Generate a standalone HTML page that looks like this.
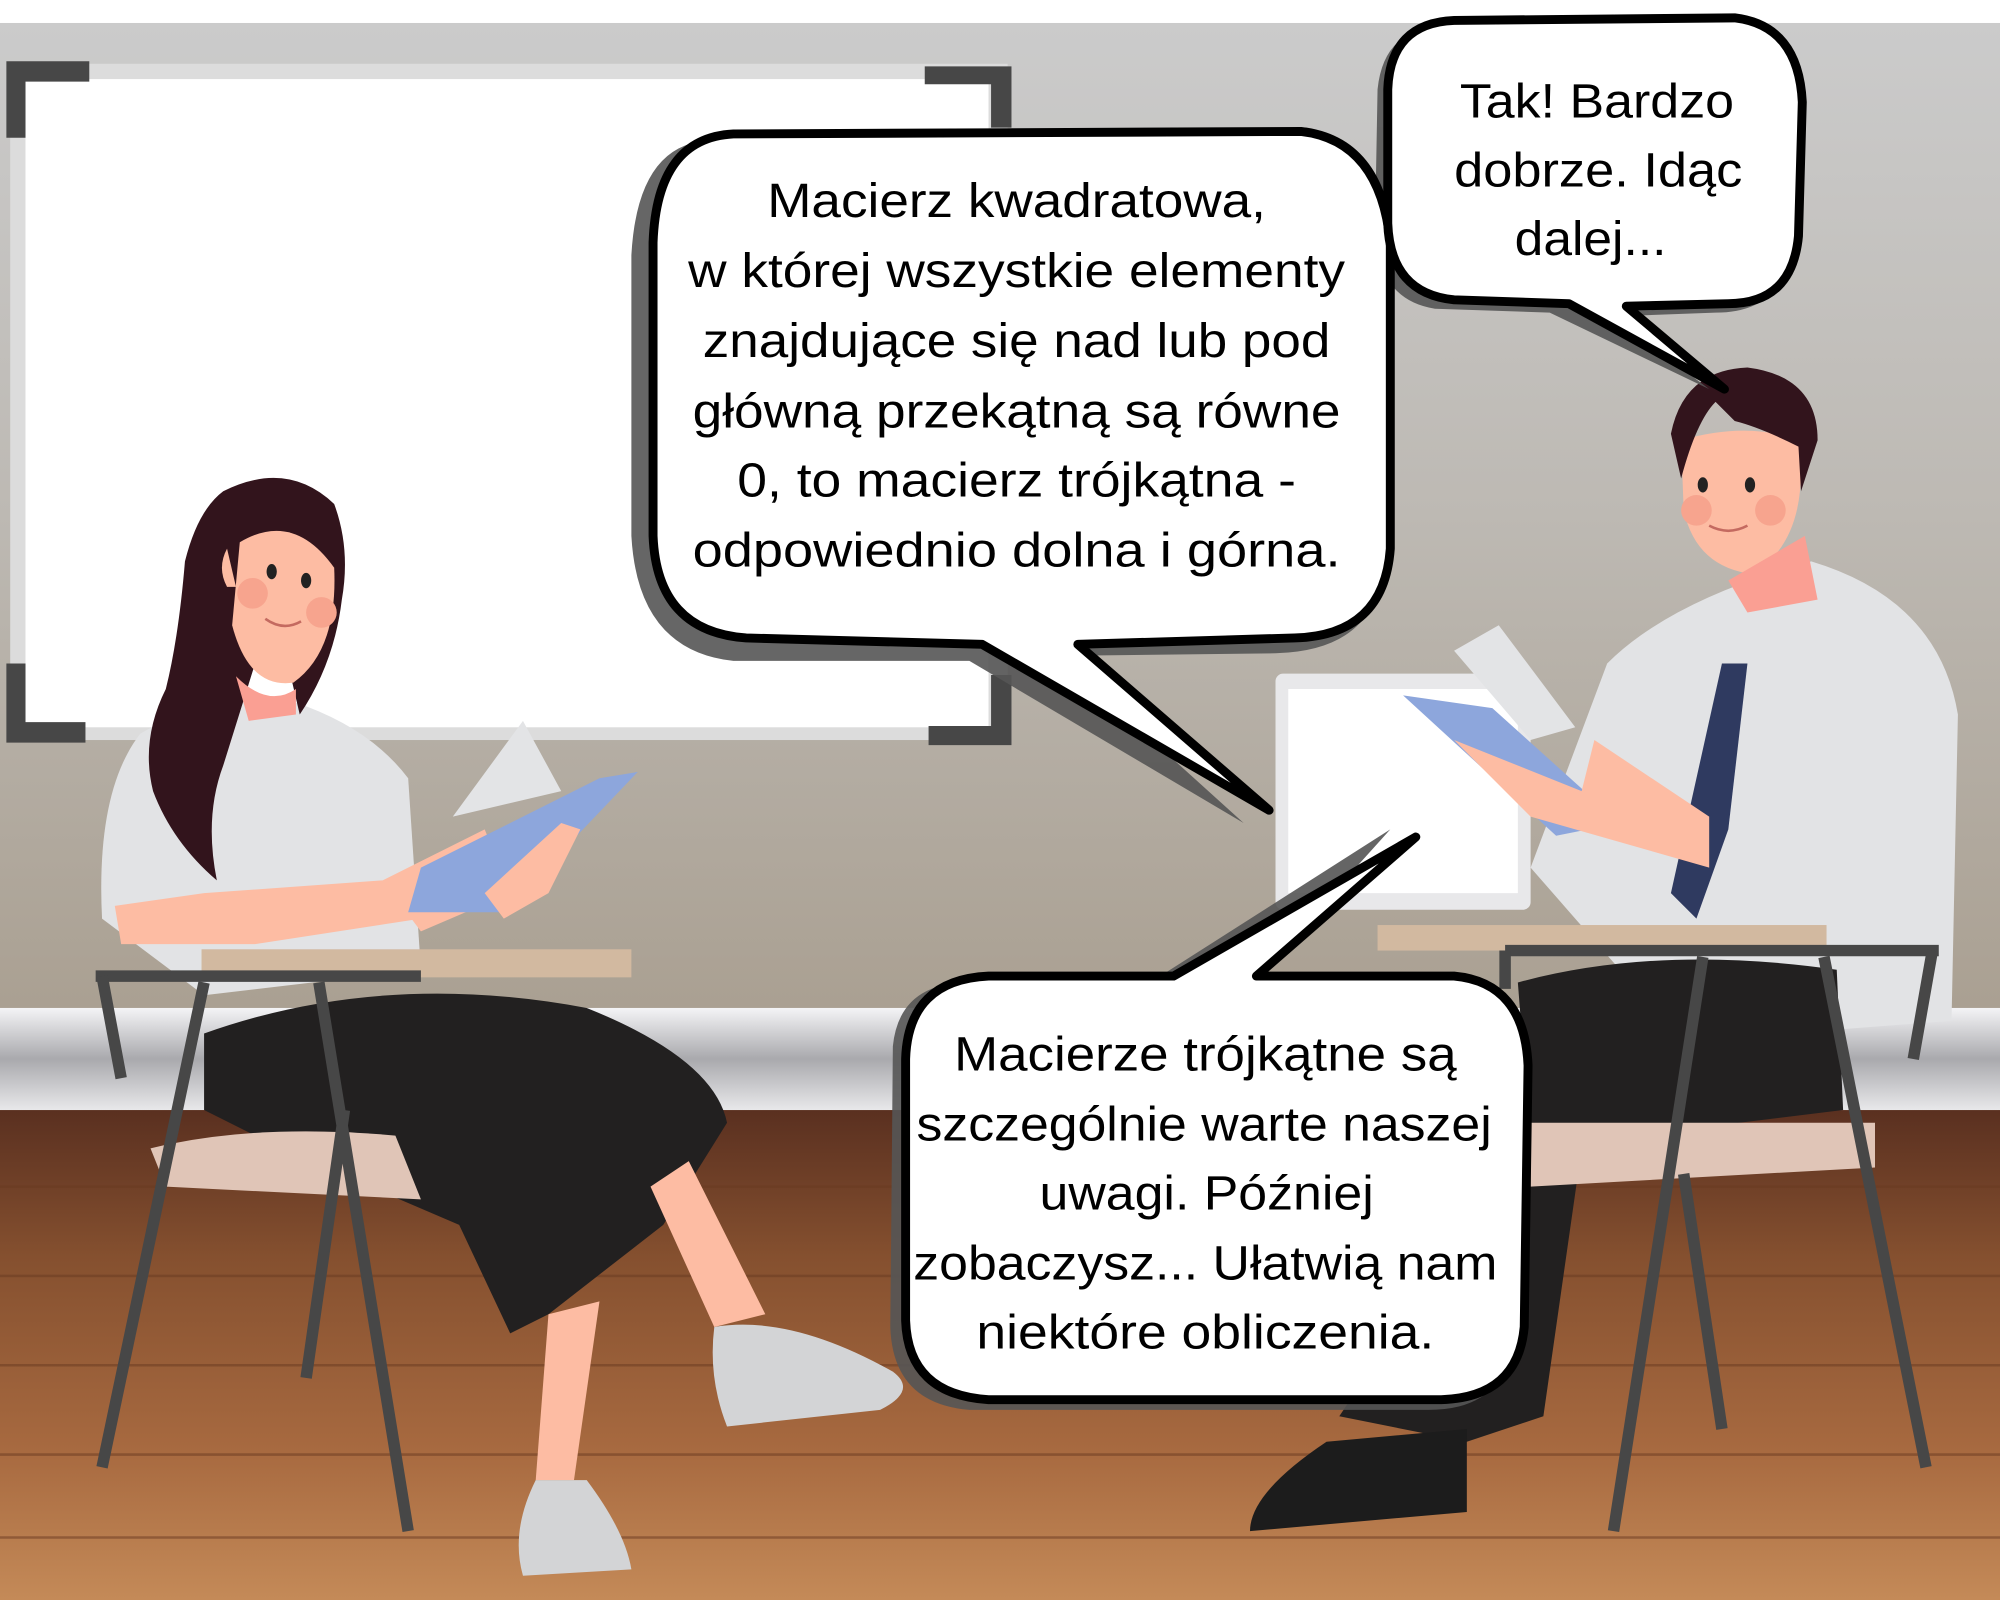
<!DOCTYPE html>
<html><head><meta charset="utf-8"><style>html,body{margin:0;padding:0;width:2000px;height:1600px;overflow:hidden;background:#fff}svg{display:block}
text{font-family:"Liberation Sans",sans-serif;font-size:38px;fill:#000;text-anchor:middle}</style></head><body>
<svg width="2000" height="1600" viewBox="0 0 1568 1254" preserveAspectRatio="none" xmlns="http://www.w3.org/2000/svg">
<defs>
<linearGradient id="wall" x1="0" y1="0" x2="0" y2="1"><stop offset="0" stop-color="#cbcbcb"/><stop offset="0.5" stop-color="#bdb9b3"/><stop offset="1" stop-color="#aaa092"/></linearGradient>
<linearGradient id="base" x1="0" y1="0" x2="0" y2="1"><stop offset="0" stop-color="#f4f4f6"/><stop offset="0.5" stop-color="#a9a9ad"/><stop offset="1" stop-color="#e8e8ea"/></linearGradient>
<linearGradient id="floor" x1="0" y1="0" x2="0" y2="1"><stop offset="0" stop-color="#5a3020"/><stop offset="0.3" stop-color="#85502f"/><stop offset="0.7" stop-color="#a86a40"/><stop offset="1" stop-color="#c48a58"/></linearGradient>
</defs>
<rect width="1568" height="1254" fill="#fff"/>
<rect y="18" width="1568" height="772" fill="url(#wall)"/>
<rect y="790" width="1568" height="80" fill="url(#base)"/>
<rect y="870" width="1568" height="384" fill="url(#floor)"/>
<g stroke="#6a3a22" stroke-width="2" opacity="0.5">
<line x1="0" y1="930" x2="1568" y2="930"/><line x1="0" y1="1000" x2="1568" y2="1000"/><line x1="0" y1="1070" x2="1568" y2="1070"/><line x1="0" y1="1140" x2="1568" y2="1140"/><line x1="0" y1="1205" x2="1568" y2="1205"/></g>
<!-- whiteboard -->
<rect x="8" y="50" width="782" height="530" fill="#dcdcdc"/>
<rect x="20" y="62" width="755" height="508" fill="#fff"/>
<path d="M5 108V48h65v16H20v44z M725 52h68v48h-16V66h-52z M5 520v62h62v-16H20v-46z M728 584h65v-55h-16v40h-49z" fill="#474747"/>
<!-- monitor -->
<rect x="1000" y="528" width="200" height="185" rx="6" fill="#e8e8ea"/>
<rect x="1010" y="540" width="180" height="160" fill="#fff"/>
<!-- woman -->
<path d="M110 575 Q170 540 230 550 Q290 570 320 610 L330 760 L160 780 L80 720 Q75 620 110 575Z" fill="#e2e3e5"/>
<path d="M175 385 Q225 360 262 395 Q275 430 268 470 Q262 520 235 560 L228 530 L200 520 L175 600 Q160 640 170 690 Q135 660 120 620 Q110 580 130 540 Q140 500 145 440 Q155 400 175 385Z" fill="#32141c"/>
<path d="M188 425 Q230 400 262 445 Q265 510 230 535 Q195 540 182 490Z" fill="#fdbca3"/>
<path d="M178 430 Q170 445 178 460 L185 460Z" fill="#fdbca3"/>
<circle cx="198" cy="465" r="12" fill="#f7a48e"/><circle cx="252" cy="480" r="12" fill="#f7a48e"/>
<ellipse cx="213" cy="448" rx="4" ry="6" fill="#222"/><ellipse cx="240" cy="455" rx="4" ry="6" fill="#222"/>
<path d="M208 485 Q222 495 236 487" stroke="#c46a60" stroke-width="2" fill="none"/>
<path d="M185 530 Q210 555 232 540 L232 560 L195 565Z" fill="#fa9f93"/>
<path d="M90 710 L160 700 L300 690 L330 720 L200 740 L95 740Z" fill="#fdbca3"/>
<path d="M300 690 L380 650 L400 700 L330 730Z" fill="#fdbca3"/>
<path d="M355 640 L410 565 L440 620Z" fill="#e3e4e6"/>
<path d="M330 680 L470 610 L500 605 L395 715 L320 715Z" fill="#8da6dc"/>
<path d="M380 700 L440 645 L455 650 L430 700 L395 720Z" fill="#fdbca3"/>
<path d="M160 810 Q300 760 460 790 Q560 830 570 880 L520 960 L430 1030 L400 1045 L360 960 L220 900 L160 870Z" fill="#222020"/>
<path d="M430 1030 L420 1160 L450 1160 L470 1020Z" fill="#fdbca3"/>
<path d="M510 930 L560 1040 L600 1030 L540 910Z" fill="#fdbca3"/>
<path d="M560 1040 Q620 1030 700 1075 Q720 1090 690 1105 L570 1118 Q555 1080 560 1040Z" fill="#d3d4d6"/>
<path d="M420 1160 L460 1160 Q490 1200 495 1230 L410 1235 Q400 1200 420 1160Z" fill="#d3d4d6"/>
<path d="M118 900 Q200 880 310 890 L330 940 L130 930Z" fill="#e0c5b7"/>
<rect x="158" y="744" width="337" height="22" fill="#d2b9a0"/>
<g stroke="#474747" stroke-width="9" fill="none"><path d="M75 765h255"/><path d="M80 765l15 80M160 770l-80 380M250 770l70 430M270 870l-30 210"/></g>
<!-- man -->
<path d="M1260 520 Q1310 470 1420 440 Q1520 470 1535 560 L1530 800 L1400 810 L1270 760 L1200 680Z" fill="#e2e3e5"/>
<path d="M1318 345 Q1370 330 1410 345 Q1420 420 1375 450 Q1330 445 1320 400Z" fill="#fdbca3"/>
<path d="M1355 455 L1415 420 L1425 470 L1370 480Z" fill="#fa9f93"/>
<path d="M1310 340 Q1320 290 1370 288 Q1425 295 1425 345 L1412 385 L1410 350 Q1380 335 1360 330 L1345 315 Q1330 330 1318 375Z" fill="#32141c"/>
<circle cx="1330" cy="400" r="12" fill="#f7a48e"/><circle cx="1388" cy="400" r="12" fill="#f7a48e"/>
<ellipse cx="1335" cy="380" rx="4" ry="6" fill="#222"/><ellipse cx="1372" cy="380" rx="4" ry="6" fill="#222"/>
<path d="M1340 412 Q1355 420 1370 412" stroke="#c46a60" stroke-width="2" fill="none"/>
<path d="M1350 520 L1370 520 L1355 650 L1330 720 L1310 700Z" fill="#2f3a60"/>
<path d="M1140 510 L1175 490 L1235 570 L1200 580Z" fill="#e3e4e6"/>
<path d="M1100 545 L1170 555 L1270 645 L1220 655Z" fill="#8da6dc"/>
<path d="M1140 580 L1200 640 L1340 680 L1340 640 L1250 580 L1240 620Z" fill="#fdbca3"/>
<path d="M1190 770 Q1300 740 1440 760 L1445 870 L1200 900Z" fill="#222020"/>
<path d="M1190 900 L1240 900 L1210 1110 L1150 1130 L1050 1110Z" fill="#222020"/>
<path d="M1040 1130 L1150 1120 L1150 1185 L980 1200 Q980 1170 1040 1130Z" fill="#1c1c1c"/>
<path d="M1200 880 L1470 880 L1470 915 L1200 930Z" fill="#e0c5b7"/>
<rect x="1080" y="725" width="352" height="20" fill="#d2b9a0"/>
<g stroke="#474747" stroke-width="9" fill="none"><path d="M1180 745h340"/><path d="M1335 750l-70 450M1430 750l80 400M1515 745l-15 85M1320 920l30 200M1180 745v30"/></g>
<!-- bubbles shadows -->
<g fill="#555" opacity="0.9">
<path d="M560 110 L1040 108 Q1080 115 1082 180 L1085 440 Q1080 510 1000 512 L830 514 L975 645 L760 518 L575 518 Q500 510 495 420 L495 200 Q500 110 560 110Z"/>
<path d="M1130 22 L1360 20 Q1405 25 1408 80 L1405 190 Q1400 245 1345 245 L1265 248 L1340 305 L1215 245 L1125 242 Q1080 235 1078 180 L1080 70 Q1085 22 1130 22Z"/>
<path d="M760 770 L905 768 L1090 650 L980 772 L1140 772 Q1190 780 1190 840 L1185 1050 Q1180 1105 1120 1105 L760 1105 Q700 1100 698 1040 L700 820 Q705 770 760 770Z"/>
</g>
<!-- bubbles -->
<g fill="#fff" stroke="#000" stroke-width="7" stroke-linejoin="round">
<path d="M575 105 L1020 103 Q1082 110 1090 190 L1090 430 Q1085 498 1015 500 L845 505 L995 635 L770 505 L585 500 Q515 495 512 420 L512 190 Q515 108 575 105Z"/>
<path d="M1140 16 L1360 14 Q1410 20 1413 80 L1410 185 Q1405 238 1355 238 L1275 240 L1352 305 L1230 238 L1140 235 Q1090 230 1088 175 L1088 70 Q1090 18 1140 16Z"/>
<path d="M775 765 L920 765 L1110 656 L985 765 L1140 765 Q1195 770 1198 835 L1195 1040 Q1190 1095 1130 1097 L775 1097 Q712 1093 710 1035 L710 830 Q712 768 775 765Z"/>
</g>
<text x="797" y="170" textLength="391" lengthAdjust="spacingAndGlyphs">Macierz kwadratowa,</text>
<text x="797" y="225" textLength="515" lengthAdjust="spacingAndGlyphs">w której wszystkie elementy</text>
<text x="797" y="280" textLength="492" lengthAdjust="spacingAndGlyphs">znajdujące się nad lub pod</text>
<text x="797" y="335" textLength="508" lengthAdjust="spacingAndGlyphs">główną przekątną są równe</text>
<text x="797" y="389" textLength="438" lengthAdjust="spacingAndGlyphs">0, to macierz trójkątna -</text>
<text x="797" y="444" textLength="508" lengthAdjust="spacingAndGlyphs">odpowiednio dolna i górna.</text>
<text x="1252" y="92" textLength="215" lengthAdjust="spacingAndGlyphs">Tak! Bardzo</text>
<text x="1253" y="146" textLength="226" lengthAdjust="spacingAndGlyphs">dobrze. Idąc</text>
<text x="1247" y="200" textLength="119" lengthAdjust="spacingAndGlyphs">dalej...</text>
<text x="945" y="839" textLength="394" lengthAdjust="spacingAndGlyphs">Macierze trójkątne są</text>
<text x="944" y="894" textLength="451" lengthAdjust="spacingAndGlyphs">szczególnie warte naszej</text>
<text x="946" y="948" textLength="262" lengthAdjust="spacingAndGlyphs">uwagi. Później</text>
<text x="945" y="1003" textLength="458" lengthAdjust="spacingAndGlyphs">zobaczysz... Ułatwią nam</text>
<text x="945" y="1057" textLength="359" lengthAdjust="spacingAndGlyphs">niektóre obliczenia.</text>
</svg>
</body></html>
